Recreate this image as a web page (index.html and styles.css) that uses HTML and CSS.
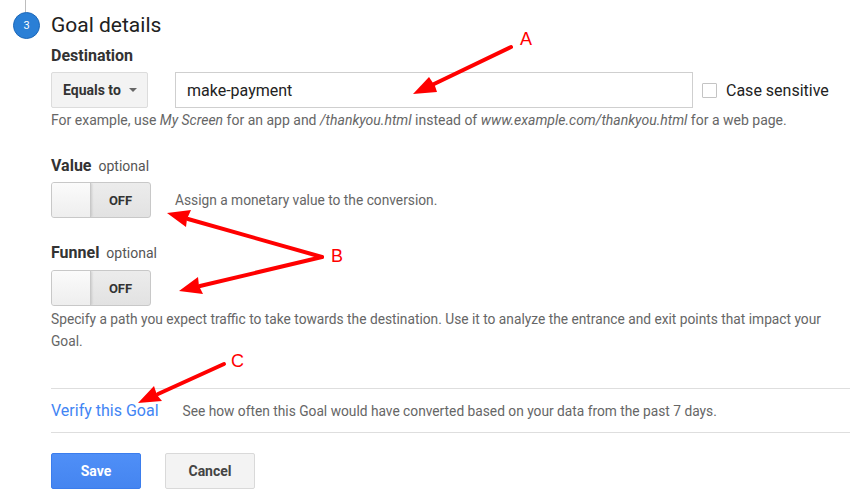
FILE: index.html
```html
<!DOCTYPE html>
<html lang="en">
<head>
    <meta charset="UTF-8">
    <title>Goal details</title>
    <link rel="stylesheet" href="styles.css">
</head>
<body>
    <div class="step">
        <!-- Step rail -->
        <div class="rail">
            <div class="rail-line"></div>
            <div class="badge">3</div>
        </div>

        <div class="content">
            <h2 class="title">Goal details</h2>

            <div class="label dest-label">Destination</div>
            <div class="dest-row">
                <div class="dropdown">Equals to <span class="caret"></span></div>
                <input class="dest-input" type="text" value="make-payment">
                <label class="check"><span class="box"></span>Case sensitive</label>
            </div>
            <p class="hint">For example, use <i>My Screen</i> for an app and <i>/thankyou.html</i> instead of <i>www.example.com/thankyou.html</i> for a web page.</p>

            <div class="label value-label">Value <span class="opt">optional</span></div>
            <div class="toggle-row value-toggle">
                <div class="toggle"><span class="knob"></span><span class="state">OFF</span></div>
                <span class="toggle-note">Assign a monetary value to the conversion.</span>
            </div>

            <div class="label funnel-label">Funnel <span class="opt">optional</span></div>
            <div class="toggle-row">
                <div class="toggle"><span class="knob"></span><span class="state">OFF</span></div>
            </div>
            <p class="desc">Specify a path you expect traffic to take towards the destination. Use it to analyze the entrance and exit points that impact your Goal.</p>

            <div class="verify">
                <a class="verify-link" href="#">Verify this Goal</a>
                <span class="verify-note">See how often this Goal would have converted based on your data from the past 7 days.</span>
            </div>

            <div class="actions">
                <button class="btn btn-save">Save</button>
                <button class="btn btn-cancel">Cancel</button>
            </div>
        </div>
    </div>

    <!-- Annotation arrows drawn over the form -->
    <svg class="notes" width="859" height="500" viewBox="0 0 859 500">
        <g stroke="#f00" stroke-width="4" stroke-linecap="round" fill="none">
            <line x1="511" y1="47" x2="433" y2="84.5"/>
            <line x1="322" y1="257" x2="188" y2="219"/>
            <line x1="322" y1="257" x2="200" y2="286"/>
            <line x1="224" y1="364" x2="158" y2="394"/>
        </g>
        <g fill="#f00">
            <polygon points="413,94 429,77 435,86 437,92"/>
            <polygon points="167,213 191,210 187,219 186,227"/>
            <polygon points="179,291 198,277 199,286 203,294"/>
            <polygon points="138,403 154,386 157,395 162,401"/>
        </g>
        <g class="note-letter" fill="#f00">
            <text x="520" y="45">A</text>
            <text x="331" y="262">B</text>
            <text x="231" y="367">C</text>
        </g>
    </svg>
</body>
</html>
```

FILE: styles.css
```css
body {
    margin: 0;
    font-family: Roboto, "Liberation Sans", Arial, sans-serif;
    color: #333;
    background: #fff;
    overflow: hidden;
}

.step {
    display: flex;
}

/* Step rail with number badge */
.rail {
    width: 51px;
    flex-shrink: 0;
}

.rail-line {
    width: 1px;
    height: 12px;
    margin-left: 25px;
    background: #bdbdbd;
}

.badge {
    width: 25px;
    height: 25px;
    margin-left: 13px;
    border-radius: 50%;
    border: 1px solid #1c67b8;
    background: #2a7fd6;
    color: #fff;
    font-size: 11px;
    line-height: 25px;
    text-align: center;
}

.content {
    width: 799px;
}

.title {
    margin: 13px 0 0;
    font-size: 21px;
    font-weight: normal;
    line-height: 24px;
    color: #212121;
}

.label {
    font-size: 16px;
    font-weight: bold;
    line-height: 18px;
    color: #333;
}

.dest-label {
    margin-top: 10px;
}

.opt {
    font-size: 14px;
    font-weight: normal;
    color: #555;
    margin-left: 3px;
}

.dest-row {
    display: flex;
    align-items: center;
    margin-top: 7px;
}

.dropdown {
    width: 95px;
    height: 34px;
    box-sizing: content-box;
    border: 1px solid #dcdcdc;
    border-radius: 2px;
    background: #f3f3f3;
    font-size: 14px;
    font-weight: bold;
    color: #333;
    white-space: nowrap;
    display: flex;
    align-items: center;
    justify-content: space-between;
    padding: 0;
}

.dropdown::before {
    content: "";
    width: 11px;
}

.caret {
    width: 0;
    height: 0;
    margin: 0 10px 0 auto;
    border-left: 4px solid transparent;
    border-right: 4px solid transparent;
    border-top: 4px solid #666;
}

.dest-input {
    width: 518px;
    height: 36px;
    box-sizing: border-box;
    margin: 0 0 0 27px;
    padding: 0 11px;
    border: 1px solid #cfcfcf;
    border-radius: 0;
    font-family: inherit;
    font-size: 16px;
    color: #222;
    outline: none;
}

.check {
    display: flex;
    align-items: center;
    margin-left: 9px;
    font-size: 16px;
    color: #222;
}

.box {
    width: 13px;
    height: 13px;
    border: 1px solid #c4c4c4;
    border-radius: 1px;
    margin-right: 9px;
}

.hint {
    margin: 3px 0 0;
    font-size: 14px;
    line-height: 18px;
    color: #666;
}

.value-label {
    margin-top: 28px;
}

.funnel-label {
    margin-top: 26px;
}

.toggle-row {
    display: flex;
    align-items: center;
    margin-top: 8px;
}

.value-toggle {
    margin-top: 7px;
}

.toggle {
    width: 98px;
    height: 34px;
    border: 1px solid #c8c8c8;
    border-radius: 3px;
    background: linear-gradient(#ececec, #e2e2e2);
    display: flex;
    align-items: stretch;
    overflow: hidden;
}

.knob {
    width: 38px;
    background: linear-gradient(#fbfbfb, #eeeeee);
    border-right: 1px solid #c8c8c8;
    box-shadow: 1px 0 2px rgba(0, 0, 0, 0.12);
}

.state {
    flex: 1;
    font-size: 13px;
    font-weight: bold;
    color: #333;
    display: flex;
    align-items: center;
    justify-content: center;
}

.toggle-note {
    margin-left: 24px;
    font-size: 13.75px;
    color: #666;
}

.desc {
    margin: 2px 0 0;
    font-size: 13.75px;
    line-height: 22px;
    color: #666;
}

.verify {
    margin-top: 36px;
    height: 43px;
    border-top: 1px solid #dedede;
    border-bottom: 1px solid #dedede;
    display: flex;
    align-items: center;
}

.verify-link {
    font-size: 16px;
    color: #4285f4;
    text-decoration: none;
}

.verify-note {
    margin-left: 24px;
    font-size: 13.75px;
    color: #666;
}

.actions {
    display: flex;
    gap: 24px;
    margin-top: 20px;
}

.btn {
    width: 90px;
    height: 36px;
    border-radius: 2px;
    font-family: inherit;
    font-size: 14px;
    font-weight: bold;
    cursor: pointer;
}

.btn-save {
    border: 1px solid #3b7ded;
    background: linear-gradient(#4f8ff7, #4585f0);
    color: #fff;
}

.btn-cancel {
    border: 1px solid #d9d9d9;
    background: #f3f3f3;
    color: #444;
}

/* Red annotation overlay */
.notes {
    position: absolute;
    top: 0;
    left: 0;
    pointer-events: none;
}

.note-letter {
    font-family: "Liberation Sans", Arial, sans-serif;
    font-size: 18px;
}
```
